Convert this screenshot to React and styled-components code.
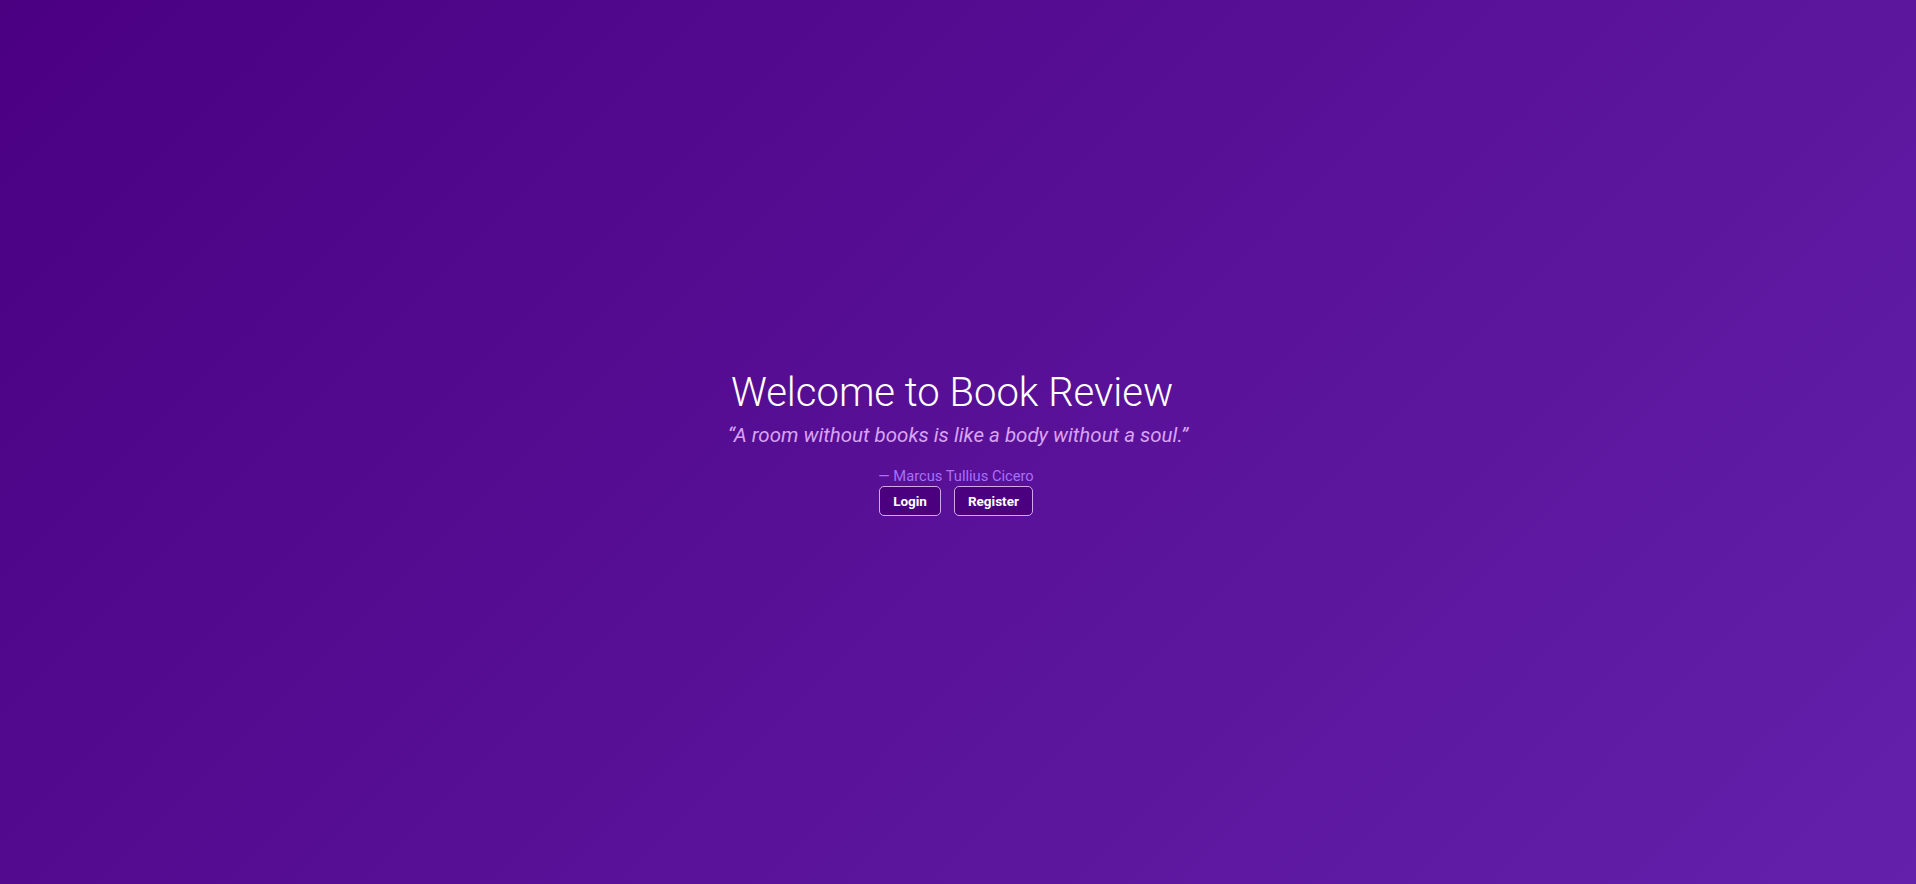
import styled, { createGlobalStyle } from "styled-components";

const GlobalStyle = createGlobalStyle`
  * {
    box-sizing: border-box;
  }
  body {
    margin: 0;
    font-family: Roboto, "Liberation Sans", sans-serif;
  }
`;

const Page = styled.div`
  width: 100%;
  height: 100vh;
  display: flex;
  flex-direction: column;
  justify-content: center;
  align-items: center;
  background: linear-gradient(135deg, #4b0082 0%, #6420ab 100%);
  color: #ffffff;
  text-align: center;
`;

const Title = styled.h1`
  margin: 0;
  padding-right: 12px;
  font-size: 40px;
  font-weight: 300;
  line-height: 47px;
  color: #ffffff;
`;

const Quote = styled.p`
  margin: 7px 0 0;
  font-size: 20.5px;
  font-style: italic;
  line-height: 24px;
  color: #d9a3f5;
`;

const Author = styled.p`
  margin: 20px 0 0;
  padding-right: 4px;
  font-size: 14.7px;
  line-height: 18px;
  color: #a96ffa;
`;

const Actions = styled.div`
  display: flex;
  gap: 13px;
  margin-top: 1px;
  padding-right: 4px;
`;

const Button = styled.button`
  height: 30px;
  padding: 0 13px;
  border: 1px solid #cfa9ef;
  border-radius: 5px;
  background-color: #4b0080;
  color: #ffffff;
  font-family: Roboto, "Liberation Sans", sans-serif;
  font-size: 13.5px;
  font-weight: 700;
  cursor: pointer;
`;

const App = () => {
  return (
    <>
      <GlobalStyle />
      <Page>
        <Title>Welcome to Book Review</Title>
        <Quote>“A room without books is like a body without a soul.”</Quote>
        <Author>— Marcus Tullius Cicero</Author>
        <Actions>
          <Button>Login</Button>
          <Button>Register</Button>
        </Actions>
      </Page>
    </>
  );
};

export default App;
